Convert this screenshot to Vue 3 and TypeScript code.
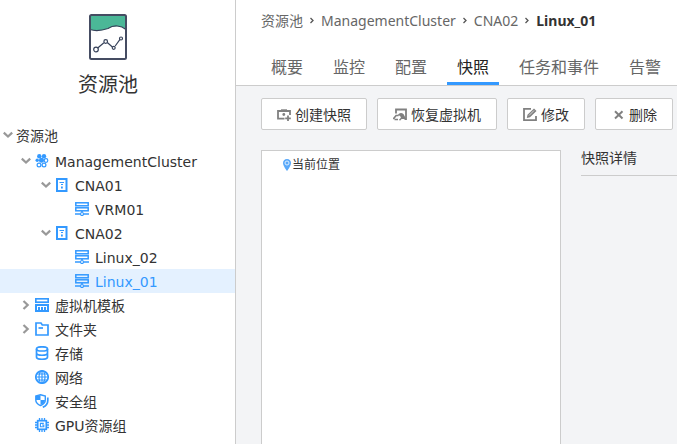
<script setup lang="ts">
import { ref } from 'vue'

type IconName = 'none' | 'cluster' | 'host' | 'vm' | 'template' | 'folder' | 'storage' | 'network' | 'shield' | 'gpu'

interface TreeNode {
  label: string
  level: number
  icon: IconName
  arrow: 'open' | 'closed' | 'none'
}

const nodes: TreeNode[] = [
  { label: '资源池', level: 0, icon: 'none', arrow: 'open' },
  { label: 'ManagementCluster', level: 1, icon: 'cluster', arrow: 'open' },
  { label: 'CNA01', level: 2, icon: 'host', arrow: 'open' },
  { label: 'VRM01', level: 3, icon: 'vm', arrow: 'none' },
  { label: 'CNA02', level: 2, icon: 'host', arrow: 'open' },
  { label: 'Linux_02', level: 3, icon: 'vm', arrow: 'none' },
  { label: 'Linux_01', level: 3, icon: 'vm', arrow: 'none' },
  { label: '虚拟机模板', level: 1, icon: 'template', arrow: 'closed' },
  { label: '文件夹', level: 1, icon: 'folder', arrow: 'closed' },
  { label: '存储', level: 1, icon: 'storage', arrow: 'none' },
  { label: '网络', level: 1, icon: 'network', arrow: 'none' },
  { label: '安全组', level: 1, icon: 'shield', arrow: 'none' },
  { label: 'GPU资源组', level: 1, icon: 'gpu', arrow: 'none' },
]
const crumbs = ['资源池', 'ManagementCluster', 'CNA02']
const tabs = ['概要', '监控', '配置', '快照', '任务和事件', '告警']
const actions = [
  { label: '创建快照', icon: 'create' },
  { label: '恢复虚拟机', icon: 'restore' },
  { label: '修改', icon: 'edit' },
  { label: '删除', icon: 'remove' },
]

const selected = ref('Linux_01')
const activeTab = ref('快照')
</script>

<template>
  <div class="page">
    <aside class="sidebar">
      <header class="brand">
        <svg class="brand-icon" width="40" height="48" viewBox="0 0 40 48" fill="none">
          <rect x="2" y="2" width="36" height="44" rx="1" fill="#fff" />
          <path d="M2 2h36v14.500c-5-4-12-4-18-1-6 2-12 3-18 1z" fill="#4bb797" />
          <path d="M2 16.500c6 2 12 1 18-1 6-4 13-3 18 1" stroke="#37425a" stroke-width="1.200" />
          <rect x="2" y="2" width="36" height="44" rx="1.500" stroke="#454c62" stroke-width="2" />
          <path d="M9.700 35l6.200-5.300M19.300 29.500l4.800 4.200M27.200 33l4.800-6.700" stroke="#37425a" stroke-width="1.200" />
          <g stroke="#37425a" stroke-width="1.200">
            <circle cx="8" cy="36.500" r="2.300" />
            <circle cx="17.700" cy="28.500" r="1.800" />
            <circle cx="25.700" cy="34.800" r="1.500" />
            <circle cx="33" cy="25.500" r="1.500" />
          </g>
        </svg>
        <h1>资源池</h1>
      </header>
      <ul class="tree">
        <li v-for="node in nodes" :key="node.label">
          <button
            type="button"
            class="node"
            :class="['level-' + node.level, { selected: node.label === selected }]"
            @click="selected = node.label"
          >
            <span class="arrow">
              <svg v-if="node.arrow === 'open'" width="10" height="10" viewBox="0 0 10 10">
                <path d="M.8 2.600l4.200 4 4.200-4" fill="none" stroke="#999" stroke-width="2.200" />
              </svg>
              <svg v-if="node.arrow === 'closed'" width="10" height="10" viewBox="0 0 10 10">
                <path d="M2.500 1l4.200 4-4.200 4" fill="none" stroke="#999" stroke-width="2.200" />
              </svg>
            </span>
            <svg v-if="node.icon !== 'none'" class="node-icon" width="14" height="14" viewBox="0 0 14 14" fill="none" stroke="#3399ff" stroke-width="1.700">
              <template v-if="node.icon === 'cluster'">
                <g fill="#3399ff" stroke="none">
                  <circle cx="4.300" cy="2.300" r="2.200" />
                  <circle cx="9" cy="2.300" r="2.200" />
                  <circle cx="6.500" cy="6.200" r="2.500" />
                  <circle cx="2.200" cy="6.300" r="1.700" />
                </g>
                <g stroke-width="1.200">
                  <circle cx="11" cy="6.500" r="1.800" />
                  <circle cx="4" cy="11" r="1.900" />
                  <circle cx="9" cy="11" r="1.900" />
                </g>
              </template>
              <template v-else-if="node.icon === 'host'">
                <rect x="2" y="1" width="9.500" height="12" stroke-width="2" />
                <path d="M4.500 4.500h4.500M6 6.500h2" stroke-width="1.200" />
                <path d="M6 9.500h1.800" stroke-width="1.800" />
              </template>
              <template v-else-if="node.icon === 'vm'">
                <rect x="0.800" y="0.800" width="12.400" height="3" stroke-width="1.500" />
                <rect x="0.800" y="5.800" width="12.400" height="3" stroke-width="1.500" />
                <path d="M7 9v1M0 12h5M9 12h5" />
                <circle cx="7" cy="12" r="1.500" stroke-width="1.200" />
              </template>
              <template v-else-if="node.icon === 'template'">
                <rect x="0.800" y="0.800" width="12.400" height="3.400" />
                <path d="M0 6h14v8H0z" fill="#3399ff" stroke="none" />
                <path d="M2 8.500h10M2.500 8v4M5.500 8v4M8.500 8v4M11.500 8v4" stroke="#fff" stroke-width="1" />
              </template>
              <template v-else-if="node.icon === 'folder'">
                <path d="M1 13V1H6l1.300 2H13v10z" />
                <path d="M3.500 6H8" />
              </template>
              <template v-else-if="node.icon === 'storage'">
                <ellipse cx="7" cy="2.900" rx="5.500" ry="2.100" />
                <path d="M1.500 3v8c0 3 11 3 11 0V3M1.500 7c0 3 11 3 11 0" />
              </template>
              <template v-else-if="node.icon === 'network'">
                <circle cx="7" cy="7" r="6.200" />
                <ellipse cx="7" cy="7" rx="3" ry="6.200" stroke-width="1.200" />
                <path d="M7 1v12M1 7h12M2 4h10M2 10h10" stroke-width="1.200" />
              </template>
              <template v-else-if="node.icon === 'shield'">
                <path d="M5.500 0.700L10.300 2v4c0 2.500-2 4.400-4.800 5.600C2.700 10.400.8 8.500.8 6V2z" stroke-width="1.400" />
                <path d="M5.500 1v5H1V2zM5.500 6H10c0 2.500-2 4-4.500 5z" fill="#3399ff" stroke="none" />
                <path d="M12.800 3.500v3c0 3.500-2 5.500-5 6.800" />
              </template>
              <template v-else>
                <rect x="2.700" y="2.700" width="8.600" height="8.600" />
                <path d="M4.500 0v2.500M7 0v2.500M9.500 0v2.500M4.500 11.500V14M7 11.500V14M9.500 11.500V14M0 4.500h2.500M0 7h2.500M0 9.500h2.500M11.500 4.500H14M11.500 7H14M11.500 9.500H14" stroke-width="1.300" />
                <path d="M8.800 5.400H5.400v3.400h3.400V7H7" stroke-width="1.100" />
              </template>
            </svg>
            <span class="label">{{ node.label }}</span>
          </button>
        </li>
      </ul>
    </aside>

    <main class="main">
      <header class="head">
        <nav class="crumbs">
          <template v-for="crumb in crumbs" :key="crumb">
            <a href="#">{{ crumb }}</a>
            <svg width="6" height="8" viewBox="0 0 6 8"><path d="M1.500 1L4 3.500 1.500 6" fill="none" stroke="#555" stroke-width="1.300" /></svg>
          </template>
          <strong>Linux_01</strong>
        </nav>
        <div class="tabs" role="tablist">
          <button
            v-for="tab in tabs"
            :key="tab"
            type="button"
            role="tab"
            class="tab"
            :class="{ active: tab === activeTab }"
            :aria-selected="tab === activeTab"
            @click="activeTab = tab"
          >{{ tab }}</button>
        </div>
      </header>

      <div class="toolbar">
        <button v-for="action in actions" :key="action.label" type="button" class="action">
          <svg width="14" height="16" viewBox="0 0 14 16" fill="none" stroke="#808080" stroke-width="1.800">
            <template v-if="action.icon === 'create'">
              <path d="M7.500 12.700H1V5h12v4" />
              <path d="M4 3.300h6v1.500H4z" fill="#808080" stroke="none" />
              <circle cx="6.800" cy="8.500" r="1.400" fill="#808080" stroke="none" />
              <path d="M11 9.500V15M8.200 12.300h5.600" />
            </template>
            <template v-else-if="action.icon === 'restore'">
              <path d="M3 7.500V3.500h10V13h-1.500" />
              <path d="M.3 13l2.800-3.500h2.400M1.500 13.500H5" stroke-width="1.600" />
              <path d="M4.800 9.500C5.500 6 10.500 6 11.300 9.500L13 13H8.500L7 9.800z" fill="#808080" stroke="none" />
              <path d="M6.500 14.200l2.800-3" stroke-width="1.400" />
            </template>
            <template v-else-if="action.icon === 'edit'">
              <path d="M8 2.900H1v11.200h12V10" />
              <path d="M3.800 12l.7-3.300L11 2.500l2.500 2.500L7 11.200z" fill="#808080" stroke="none" />
              <path d="M6 9.500l5-5" stroke="#fff" stroke-width=".7" />
            </template>
            <path v-else d="M4 5.300l7.500 7.200M11.500 5.300L4 12.500" stroke-width="2" />
          </svg>
          <span class="label">{{ action.label }}</span>
        </button>
      </div>

      <div class="content">
        <section class="snapshots">
          <div class="position">
            <svg width="10" height="12" viewBox="0 0 10 12">
              <path d="M5 0C2.500 0 1 1.800 1 4c0 3 4 8 4 8s4-5 4-8c0-2.200-1.500-4-4-4z" fill="#5aa9fa" />
              <circle cx="5" cy="4" r="2" fill="none" stroke="#dceeff" stroke-width="1" />
            </svg>
            <span>当前位置</span>
          </div>
        </section>
        <section class="details">
          <h2>快照详情</h2>
        </section>
      </div>
    </main>
  </div>
</template>

<style>
body {
  margin: 0;
}
</style>

<style scoped>
.page {
  display: flex;
  min-height: 100vh;
  background: #f3f4f6;
  color: #333;
  font: 14px/20px "Noto Sans", "Noto Sans CJK SC", sans-serif;
}
button {
  margin: 0;
  border: 0;
  padding: 0;
  background: none;
  color: inherit;
  font: inherit;
  white-space: nowrap;
  cursor: pointer;
}
svg {
  flex: none;
}
.sidebar {
  flex: none;
  width: 35%;
  max-width: 235px;
  border-right: 1px solid #ccc;
  background: #fff;
}
.brand {
  display: flex;
  flex-direction: column;
  align-items: center;
  gap: 9px;
  padding: 13px 19px 0 0;
}
h1 {
  margin: 0;
  font-size: 20px;
  line-height: 30px;
  font-weight: 400;
}
.tree {
  margin: 23px 0 0;
  padding: 0;
  list-style: none;
  font-family: "DejaVu Sans", "Noto Sans CJK SC", sans-serif;
}
.node {
  display: flex;
  align-items: center;
  width: 100%;
  height: 24px;
  text-align: left;
}
.level-0 {
  margin-bottom: 2px;
  padding-left: 3px;
}
.level-1 {
  padding-left: 21px;
}
.level-2 {
  padding-left: 41px;
}
.level-3 {
  padding-left: 61px;
}
.selected {
  background: #e4f1ff;
  color: #3399ff;
}
.label {
  padding-top: 2px;
}
.arrow {
  display: flex;
  width: 13px;
}
.node-icon {
  margin-right: 6px;
  margin-left: 1px;
}
.main {
  display: flex;
  flex: 1;
  flex-direction: column;
  min-width: 0;
}
.head {
  border-bottom: 1px solid #ccc;
  padding: 11px 0 0 25px;
  background: #fff;
}
.crumbs {
  display: flex;
  align-items: center;
  gap: 6px;
}
.crumbs a {
  color: #666;
  text-decoration: none;
}
.tabs {
  display: flex;
  gap: 10px;
  margin-top: 21px;
}
.tab {
  border-bottom: 3px solid transparent;
  padding: 0 10px;
  color: #666;
  font-size: 16px;
  line-height: 30px;
}
.active {
  border-color: #3399ff;
  color: #222;
}
.toolbar {
  display: flex;
  gap: 10px;
  padding: 12px 0 20px 25px;
}
.action {
  display: flex;
  align-items: center;
  gap: 4px;
  height: 32px;
  border: 1px solid #ccc;
  border-radius: 2px;
  padding: 0 15px;
  background: #fff;
}
.content {
  display: flex;
  flex: 1;
  gap: 20px;
  padding-left: 25px;
}
.snapshots {
  box-sizing: border-box;
  flex: none;
  width: 300px;
  border: 1px solid #ccc;
  border-bottom: 0;
  padding: 4px 20px;
  background: #fff;
}
.position {
  display: flex;
  align-items: center;
  font-size: 12px;
}
.details {
  flex: 1;
}
h2 {
  margin: 0;
  border-bottom: 1px solid #ccc;
  padding-bottom: 9px;
  font-size: 14px;
  line-height: 16px;
  font-weight: 400;
}
</style>
